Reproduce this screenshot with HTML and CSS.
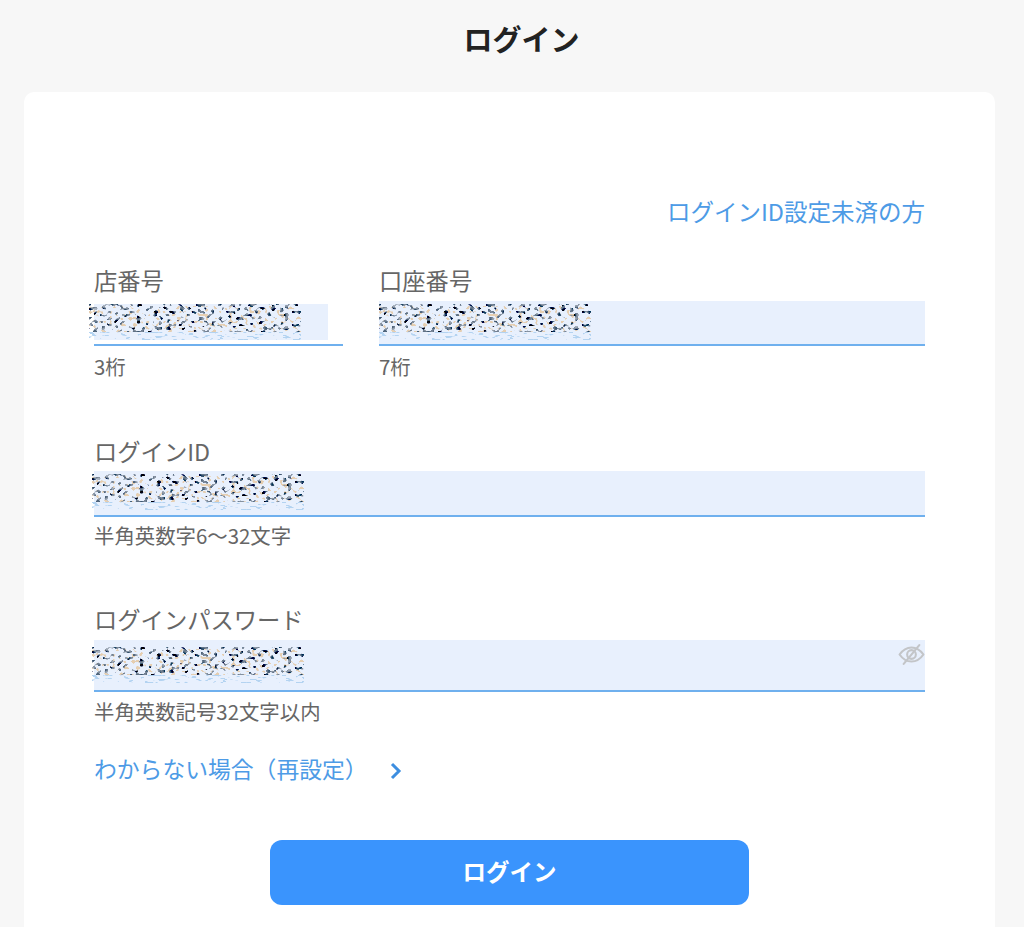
FILE: index.html
```html
<!DOCTYPE html>
<html lang="ja">
<head>
<meta charset="utf-8">
<title>ログイン</title>
<link rel="stylesheet" href="styles.css">
</head>
<body>
<svg class="defs" width="0" height="0" aria-hidden="true">
  <defs>
    <filter id="dark-noise" x="0" y="0" width="100%" height="100%">
      <feTurbulence type="fractalNoise" baseFrequency="0.23 0.3" numOctaves="1" seed="11"/>
      <feColorMatrix type="matrix" values="0 0 1.200 0 -.5  0 0 1.200 0 -.45  0 0 1.200 0 -.38  22 0 0 0 -12.600"/>
      <feGaussianBlur stdDeviation="0.5"/>
    </filter>
    <filter id="warm-noise" x="0" y="0" width="100%" height="100%">
      <feTurbulence type="fractalNoise" baseFrequency="0.25 0.3" numOctaves="1" seed="23"/>
      <feColorMatrix type="matrix" values="0 0 0 0 .78  0 0 0 0 .62  0 0 0 0 .44  22 0 0 0 -13.200"/>
      <feGaussianBlur stdDeviation="0.5"/>
    </filter>
    <filter id="light-noise" x="0" y="0" width="100%" height="100%">
      <feTurbulence type="fractalNoise" baseFrequency="0.14 0.4" numOctaves="2" seed="5"/>
      <feColorMatrix type="matrix" values="0 0 0 0 .45  0 0 0 0 .65  0 0 0 0 .88  18 0 0 0 -10.800"/>
      <feGaussianBlur stdDeviation="0.4"/>
    </filter>
    <symbol id="scribble" viewBox="0 0 212 36">
      <rect x="0" y="2" width="212" height="26" fill="#000" filter="url(#warm-noise)"/>
      <rect x="0" y="0" width="212" height="28" fill="#000" filter="url(#dark-noise)"/>
      <rect x="0" y="28" width="212" height="8" fill="#000" filter="url(#light-noise)"/>
    </symbol>
  </defs>
</svg>
<header class="top"><h1 class="title">ログイン</h1></header>
<main class="card">
  <div class="link-row"><a class="link">ログインID設定未済の方</a></div>
  <div class="two-col">
    <div class="field shop">
      <label class="label">店番号</label>
      <div class="input short"><svg class="blob blob-shop"><use href="#scribble"/></svg></div>
      <p class="hint">3桁</p>
    </div>
    <div class="field account">
      <label class="label">口座番号</label>
      <div class="input"><svg class="blob blob-account"><use href="#scribble"/></svg></div>
      <p class="hint">7桁</p>
    </div>
  </div>
  <div class="field idf">
    <label class="label">ログインID</label>
    <div class="input"><svg class="blob blob-id"><use href="#scribble"/></svg></div>
    <p class="hint">半角英数字6〜32文字</p>
  </div>
  <div class="field pw">
    <label class="label">ログインパスワード</label>
    <div class="input">
      <svg class="blob blob-pw"><use href="#scribble"/></svg>
      <svg class="eye" viewBox="0 0 26 20" width="27" height="21" fill="none" stroke="#c3c5c8" stroke-width="2" stroke-linecap="round" stroke-linejoin="round">
        <path d="M1.500 10C5 5 9 3.200 13 3.200S21 5 24.500 10C21 15 17 16.800 13 16.800S5 15 1.500 10Z"/>
        <circle cx="13" cy="10" r="4.200"/>
        <path d="M20.500 1 5.500 19"/>
      </svg>
    </div>
    <p class="hint">半角英数記号32文字以内</p>
  </div>
  <a class="link reset">わからない場合（再設定）
    <svg class="chev" viewBox="0 0 12 18" width="12" height="18" fill="none" stroke="#3d8ee0" stroke-width="3"><path d="M2 2l7 7-7 7"/></svg>
  </a>
  <div class="actions"><button class="btn">ログイン</button></div>
</main>
</body>
</html>
```
FILE: styles.css
```css
* { box-sizing: border-box; }
html, body { margin: 0; height: 927px; overflow: hidden; }
body {
  background: #f7f7f7;
  font-family: "Noto Sans CJK JP", "Noto Sans", sans-serif;
  color: #666;
}
.defs { position: absolute; }
.top { height: 92px; padding-top: 17px; padding-left: 24px; }
.title {
  margin: 0;
  text-align: center;
  width: 995px;
  font-size: 29px;
  line-height: 42px;
  font-weight: 700;
  color: #222;
}
.card {
  margin: 0 29px 0 24px;
  height: 835px;
  background: #fff;
  border-radius: 10px 10px 0 0;
  padding: 0 70px;
}
.link { color: #4d9be6; font-size: 23.500px; line-height: 32px; }
.link-row { padding-top: 103px; height: 136px; text-align: right; }
.two-col { display: flex; gap: 36px; padding-top: 35px; }
.shop { width: 249px; }
.account { flex: 1; }
.field { display: flex; flex-direction: column; }
.label { font-size: 23.300px; line-height: 34px; margin-bottom: 4px; color: #666; }
.input {
  position: relative;
  height: 45px;
  background: #e8f0fd;
  border-bottom: 2px solid #6fb0ee;
}
.short { background: linear-gradient(#e8f0fd, #e8f0fd) no-repeat -5px 3px / 239px 36px #fff; }
.hint { margin: 6px 0 0; font-size: 20.400px; line-height: 28px; color: #666; }
.idf { margin-top: 54px; }
.idf .label { margin-bottom: 3px; }
.pw { margin-top: 53px; }
.idf .hint { margin-top: 4px; }
.pw .hint { margin-top: 5px; }
.idf .input { height: 46px; }
.pw .input { height: 52px; }
.blob { position: absolute; width: 212px; height: 36px; }
.blob-shop { left: -5px; top: 3px; }
.blob-account { left: 0; top: 3px; }
.blob-id { left: -2px; top: 3px; }
.blob-pw { left: -2px; top: 7px; }
.eye { position: absolute; right: 0; top: 4px; }
.reset { display: flex; align-items: center; margin-top: 28px; font-size: 22.800px; }
.chev { margin-left: 22px; margin-top: 3px; }
.actions { display: flex; justify-content: center; margin-top: 55px; }
.btn {
  width: 479px;
  height: 65px;
  border: 0;
  border-radius: 12px;
  padding: 0 0 4px;
  background: #3a94fd;
  color: #fff;
  font: 700 23.500px "Noto Sans CJK JP", sans-serif;
}
```
